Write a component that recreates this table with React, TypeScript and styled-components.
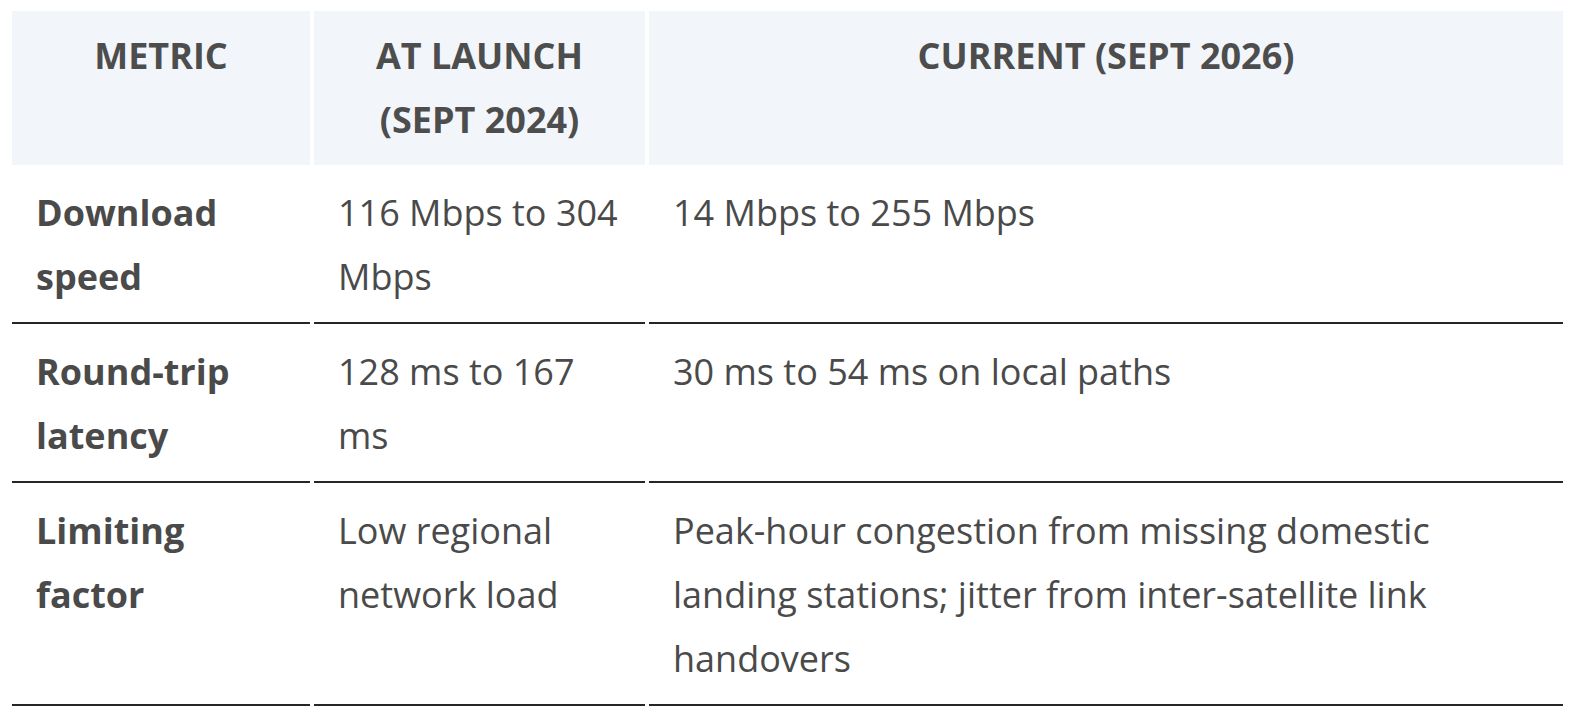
import React from 'react';
import styled, { createGlobalStyle } from 'styled-components';

const GlobalStyle = createGlobalStyle`
  body {
    margin: 8px;
    background: #ffffff;
    font-family: "Open Sans", "Liberation Sans", sans-serif;
    color: #4a4a4a;
  }
`;

const Table = styled.table`
  width: 1559px;
  table-layout: fixed;
  border-collapse: separate;
  border-spacing: 4px 3px;
  font-size: 36px;
  line-height: 64px;
`;

const HeadCell = styled.th`
  background: #f2f6fa;
  padding: 13px 24px;
  font-weight: 700;
  text-transform: uppercase;
  text-align: center;
  vertical-align: top;
  color: #4d4d4d;
`;

const Cell = styled.td<{ $strong?: boolean }>`
  padding: 13px 20px 13px 24px;
  border-bottom: 2px solid #262626;
  vertical-align: top;
  text-align: left;
  font-weight: ${(p) => (p.$strong ? 700 : 400)};
  color: #4a4a4a;
`;

const rows = [
  {
    metric: 'Download speed',
    launch: '116 Mbps to 304 Mbps',
    current: '14 Mbps to 255 Mbps',
  },
  {
    metric: 'Round-trip latency',
    launch: '128 ms to 167 ms',
    current: '30 ms to 54 ms on local paths',
  },
  {
    metric: 'Limiting factor',
    launch: 'Low regional network load',
    current:
      'Peak-hour congestion from missing domestic landing stations; jitter from inter-satellite link handovers',
  },
];

export default function App() {
  return (
    <>
      <GlobalStyle />
      <Table>
        <colgroup>
          <col style={{ width: 298 }} />
          <col style={{ width: 331 }} />
          <col style={{ width: 914 }} />
        </colgroup>
        <thead>
          <tr>
            <HeadCell>Metric</HeadCell>
            <HeadCell>At launch (Sept 2024)</HeadCell>
            <HeadCell>Current (Sept 2026)</HeadCell>
          </tr>
        </thead>
        <tbody>
          {rows.map((r) => (
            <tr key={r.metric}>
              <Cell $strong>{r.metric}</Cell>
              <Cell>{r.launch}</Cell>
              <Cell>{r.current}</Cell>
            </tr>
          ))}
        </tbody>
      </Table>
    </>
  );
}
